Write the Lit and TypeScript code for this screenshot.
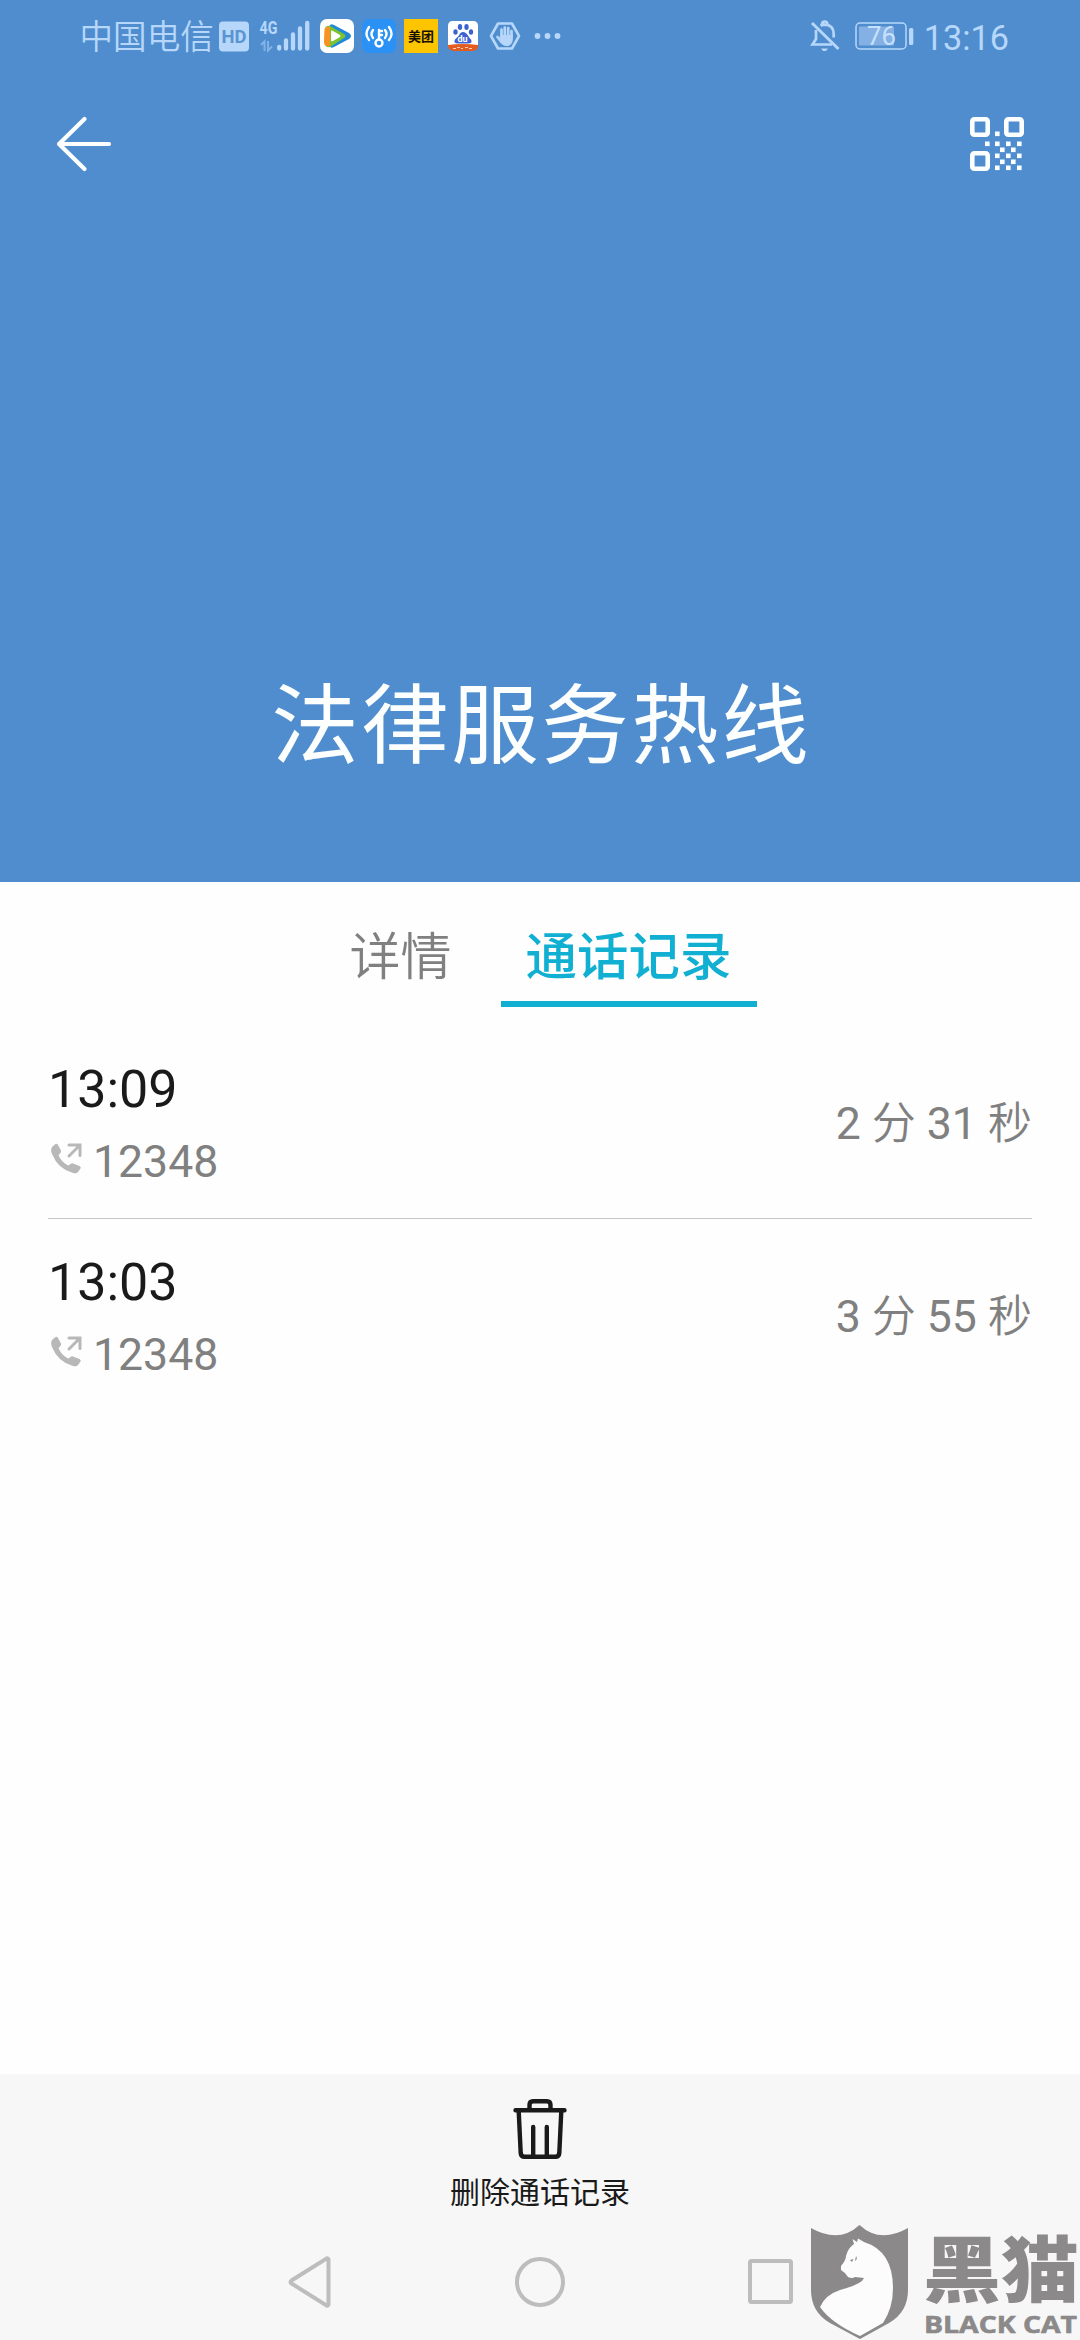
import { LitElement, html, css, svg } from "lit";
import { customElement, property } from "lit/decorators.js";

const CJK = css`"Noto Sans CJK SC", "Roboto", sans-serif`;
const LATIN = css`Roboto, "Noto Sans CJK SC", sans-serif`;

@customElement("status-bar")
class StatusBar extends LitElement {
  static styles = css`
    :host { display: flex; height: 72px; align-items: center; color: #b6d7fa; padding: 0 71px 0 79.5px; justify-content: space-between; }
    svg { display: block; flex: none; overflow: visible; }
    .group { display: flex; align-items: center; height: 72px; }
    .carrier { font: 350 33.6px/40px ${CJK}; width: 137px; margin: -2px 2.5px 0 0; white-space: nowrap; }
    .signal { margin: 0 9px 0 8px; }
    .apps { display: flex; align-items: center; gap: 8px; }
    .battery { margin: 0 9px 0 15px; }
    .time { font: 400 34.2px/40px ${LATIN}; margin-top: 3px; }
  `;
  render() {
    return html`
      <div class="group">
        <div class="carrier">中国电信</div>
        <svg width="30" height="31" viewBox="0 0 30 31">
          <rect width="30" height="30" y="0.5" rx="4" fill="#b6d7fa" />
          <text x="2.5" y="22" font-family="Roboto, sans-serif" font-weight="700" font-size="18" textLength="25" lengthAdjust="spacingAndGlyphs" fill="#5a93d2">HD</text>
        </svg>
        <svg class="signal" width="54" height="40" viewBox="0 -4 54 40">
          <text x="2.5" y="13.500" font-family="Roboto, sans-serif" font-weight="700" font-size="18" textLength="18" lengthAdjust="spacingAndGlyphs" fill="#b6d7fa">4G</text>
          <g stroke="#83b2e6" stroke-width="2" fill="none"><path d="M4 25l3.5-3.5V31M11 21v9.500l4-4" /></g>
          <g stroke="#b6d7fa" stroke-width="4.300" stroke-linecap="round">
            <path d="M22.200 27v1.500M29 20.500v8M36 14.500v14M43 8.500v20M50.200 3v25.500" />
          </g>
        </svg>
        <div class="apps">
          <svg width="34" height="34" viewBox="0 0 34 34">
            <rect width="34" height="34" rx="7" fill="#fff" />
            <path d="M9 8Q10 4 14 6L29 14Q33 17 29 20L14 28Q10 30 9 26Z" fill="#2388d8" />
            <path d="M5 10Q6 6 10 7L24 15Q27 17 24 19L10 28Q5 29 4.500 24Z" fill="#7bc42d" />
            <path d="M4.500 10Q6 7 10 8V27Q4 28 4 23Z" fill="#f89225" />
            <path d="M11 12.500Q11 11 13 12L20 16Q21 17 20 18L13 22Q11 23 11 21Z" fill="#fff" />
          </svg>
          <svg width="34" height="34" viewBox="0 0 34 34">
            <rect width="34" height="34" rx="7" fill="#2b91f5" />
            <g fill="none" stroke="#fff" stroke-width="2.400" stroke-linecap="round">
              <circle cx="17" cy="24" r="3.500" /><path d="M17 20V11M17 12h3M17 16h3" />
              <path d="M11 11q-3 4 0 8M7 8q-5 7 0 13M23 11q3 4 0 8M27 8q5 7 0 13" />
            </g>
          </svg>
          <svg width="34" height="34" viewBox="0 0 34 34">
            <rect width="34" height="34" fill="#fdc500" />
            <text x="4" y="22" font-family="Noto Sans CJK SC, sans-serif" font-weight="700" font-size="13" textLength="26" fill="#171000">美团</text>
          </svg>
          <svg width="34" height="34" viewBox="0 0 34 34">
            <path d="M7 2H27Q32 2 32 7V28H2V7Q2 2 7 2Z" fill="#fff" />
            <path d="M2 26Q17 24 32 26V28Q31 32 26 32H8Q2 31 2 27Z" fill="#e45b20" />
            <g fill="#3c62d2">
              <ellipse cx="9.500" cy="13" rx="2.200" ry="2.700" /><ellipse cx="14" cy="8" rx="2.200" ry="3" />
              <ellipse cx="20.500" cy="8" rx="2.200" ry="3" /><ellipse cx="25" cy="13" rx="2.200" ry="2.700" />
              <path d="M17 13q3 0 5 3.500t3 4q2 4-3 4H12q-5 0-3-4l4-4q1-3.500 4-3.500Z" />
            </g>
            <text x="11.500" y="23" font-family="Roboto, sans-serif" font-weight="700" font-size="9" fill="#fff">du</text>
            <path d="M7 29.500h3m1-1h3m1 1h2m2-1h3m1 1h3" stroke="#fff" stroke-width="1.200" opacity=".7" />
          </svg>
          <svg width="34" height="34" viewBox="0 0 34 34">
            <path d="M10 4.500H24L31 17L24 29.500H10L3 17Z" fill="none" stroke="#b6d7fa" stroke-width="2.600" stroke-linejoin="round" />
            <g stroke="#b6d7fa" stroke-width="2.700" stroke-linecap="round" fill="none"><path d="M13.500 18V10.500M16.800 17V8.500M20.200 17V9M23.500 18V12M9.500 18l4 5" /></g>
            <path d="M12.200 16H24.800V21Q24 27 18.500 27Q14 27 11 21Z" fill="#b6d7fa" />
          </svg>
          <svg width="34" height="34" viewBox="0 0 34 34" fill="#b6d7fa"><circle cx="7.500" cy="17" r="2.900" /><circle cx="17.500" cy="17" r="2.900" /><circle cx="27.500" cy="17" r="2.900" /></svg>
        </div>
      </div>
      <div class="group">
        <svg width="30" height="32" viewBox="0 0 30 32" fill="none" stroke="#b6d7fa" stroke-width="2.700">
          <path d="M2 3L28.500 29" stroke-width="3" />
          <path d="M6 10V19L2.500 24.500H22M10.500 5.800Q12.500 4.700 14.500 4.700Q23.700 5 23.700 14V17.500M12 4.500q0-3 2.700-3t2.700 3" />
          <path d="M11 28.500h7l-2 2.500h-3z" fill="#b6d7fa" stroke="none" />
        </svg>
        <svg class="battery" width="60" height="30" viewBox="0 0 60 30">
          <rect x="1" y="2" width="50" height="26" rx="4" fill="none" stroke="#b6d7fa" stroke-width="1.500" />
          <rect x="4" y="5.500" width="35" height="19" rx="1" fill="#85b0e3" />
          <rect x="54" y="7" width="4.300" height="17" rx="1.500" fill="#b6d7fa" />
          <text x="12" y="23.500" font-family="Roboto, sans-serif" font-size="25" textLength="29" lengthAdjust="spacingAndGlyphs" fill="#c6e1fd">76</text>
        </svg>
        <div class="time">13:16</div>
      </div>`;
  }
}

@customElement("call-row")
class CallRow extends LitElement {
  @property() time = "";
  @property() number = "";
  @property() duration = "";
  static styles = css`
    :host { display: flex; box-sizing: border-box; height: 193px; justify-content: space-between; align-items: center; font-family: ${LATIN}; border-bottom: 1px solid #c6c6c6; }
    :host([last]) { border-color: transparent; }
    .info { display: flex; flex-direction: column; gap: 14px; align-self: flex-start; padding-top: 32px; }
    .time { font-size: 52px; line-height: 64px; color: #1a1a1a; }
    .line { display: flex; gap: 11px; height: 52px; align-items: flex-start; padding-left: 2px; }
    .number { font-size: 44.6px; line-height: 52px; color: #808080; }
    .icon { display: block; margin-top: 6px; }
    .duration { font-size: 44.6px; line-height: 52px; color: #808080; padding-top: 3px; white-space: nowrap; }
    .cjk { font-weight: 350; font-size: 44px; }
  `;
  render() {
    const parts = this.duration.split(" ");
    return html`
      <div class="info">
        <div class="time">${this.time}</div>
        <div class="line">
          <svg class="icon" width="32" height="34" viewBox="0 0 32 34">
            <path d="M2.500 4.500L5.500 2Q7 1.300 8 3L11 8.500Q11.500 10 10 11.500L8.500 13Q11 20 18.500 23.500L20.500 22Q21.500 21 23 21.500L29.500 24Q31.500 25 30.500 26.500L28 30Q26.500 32 23 31Q8 27 2 12Q0 7 2.500 4.500Z" fill="#b8b8b8" />
            <path d="M19 3H30V13.500M29.500 3.500L19 14" fill="none" stroke="#b8b8b8" stroke-width="3" stroke-linecap="round" />
          </svg>
          <div class="number">${this.number}</div>
        </div>
      </div>
      <div class="duration">${parts[0]} <span class="cjk">${parts[1]}</span> ${parts[2]} <span class="cjk">${parts[3]}</span></div>`;
  }
}

@customElement("cat-mark")
class CatMark extends LitElement {
  static styles = css`
    :host { display: block; }
    svg { display: block; overflow: visible; }
  `;
  render() {
    return html`
      <svg width="270" height="116" viewBox="0 0 270 116">
        <path d="M1 4Q29 20 49.500 1Q70 20 98 4V66Q98 88 79 99L50 115L20 99Q1 88 1 66Z" fill="#8b8989" />
        <path d="M42.500 15L47 18L48 14.500L54 18Q83 27 83 64Q83 84 73 99L50 112Q21 99 10 83Q15 71 30 66Q52 60 54 54L45 53Q42 55 38 53Q36 49 31 46L31 42Q36 36 36 32Q38 24 44 20Z" fill="#fcfcfc" />
        <path d="M40 36l3.500-1l-1.500 3zM46 32q2 3-1 5z" fill="#8b8989" />
        <g fill="#8b8989">
          <text x="113" y="72" font-family="Noto Sans CJK SC, sans-serif" font-weight="900" font-size="72" textLength="156" lengthAdjust="spacingAndGlyphs">黑猫</text>
          <text x="114" y="109" font-family="Open Sans, Liberation Sans, sans-serif" font-weight="700" font-size="23.500" textLength="153" lengthAdjust="spacingAndGlyphs" stroke="#8b8989" stroke-width="0.600">BLACK CAT</text>
        </g>
      </svg>`;
  }
}

@customElement("app-root")
class AppRoot extends LitElement {
  static styles = css`
    :host { display: flex; flex-direction: column; width: 1080px; height: 2340px; position: relative; overflow: hidden; background: #fefefe; font-family: ${CJK}; }
    svg { display: block; }
    .hero { height: 882px; background: #4f8dce; display: flex; flex-direction: column; }
    .toolbar { display: flex; justify-content: space-between; align-items: center; height: 144px; padding: 0 55px 0 55px; }
    .title { margin: auto 0 113px; text-align: center; color: #fdffff; font-size: 87.5px; letter-spacing: 2.5px; text-indent: 2.5px; line-height: 100px; font-weight: 400; }
    .tabs { display: flex; justify-content: center; gap: 24px; height: 125px; padding-left: 1px; }
    .tab { box-sizing: border-box; height: 125px; padding: 40px 25px 0; font-size: 51px; line-height: 62px; color: #808080; font-weight: 350; border-bottom: 6px solid transparent; }
    .tab.active { color: #11b0d3; border-color: #11b0d3; font-weight: 500; font-size: 51.5px; }
    .list { padding: 19px 48px 0; flex: 1; }
    .footer { height: 266px; background: #f7f7f7; display: flex; flex-direction: column; align-items: center; }
    .delete { display: flex; flex-direction: column; align-items: center; height: 150px; padding-top: 23px; box-sizing: border-box; font-size: 30px; line-height: 40px; color: #1a1a1a; }
    .delete .label { margin-top: 9px; }
    .nav { display: flex; align-items: center; justify-content: space-between; width: 508px; height: 116px; padding-left: 1px; }
    .mark { position: absolute; left: 810px; top: 2224px; }
  `;
  private cells = [[25, 14], [15, 24], [25, 24], [36, 24], [47, 24], [30, 30], [41, 30], [25, 36], [36, 36], [47, 36], [30, 42], [41, 42], [25, 48], [36, 48], [47, 48]];
  private calls = [
    { time: "13:09", number: "12348", duration: "2 分 31 秒", last: false },
    { time: "13:03", number: "12348", duration: "3 分 55 秒", last: true },
  ];
  render() {
    return html`
      <div class="hero">
        <status-bar></status-bar>
        <div class="toolbar">
          <svg width="58" height="58" viewBox="0 0 58 58" fill="none" stroke="#fdffff" stroke-width="4.200" stroke-linecap="round" stroke-linejoin="round">
            <path d="M29.500 4L4 29L29.500 54M4 29H54" />
          </svg>
          <svg width="56" height="56" viewBox="-1 -1 56 56">
            <g fill="none" stroke="#fdffff" stroke-width="4.600">
              <rect x="2.300" y="2.300" width="15.400" height="15.400" rx="2" /><rect x="36.300" y="2.300" width="15.400" height="15.400" rx="2" /><rect x="2.300" y="36.300" width="15.400" height="15.400" rx="2" />
            </g>
            ${this.cells.map(([x, y]) => svg`<rect x=${x} y=${y + 0.5} width="4.600" height="4.600" fill="#fdffff" />`)}
          </svg>
        </div>
        <div class="title">法律服务热线</div>
      </div>
      <div class="tabs">
        <div class="tab">详情</div>
        <div class="tab active">通话记录</div>
      </div>
      <div class="list">
        ${this.calls.map((c) => html`<call-row .time=${c.time} .number=${c.number} .duration=${c.duration} ?last=${c.last}></call-row>`)}
      </div>
      <div class="footer">
        <div class="delete">
          <svg width="58" height="64" viewBox="0 0 58 64" fill="none" stroke="#1a1a1a" stroke-width="4.400" stroke-linecap="round" stroke-linejoin="round">
            <path d="M4.500 13.200H53.500M18.500 13V8Q18.500 4.200 22 4.200H36Q39.500 4.200 39.500 8V13M7.700 14L9.700 56Q10 59.800 13.500 59.800H44.500Q48 59.800 48.300 56L50.300 14M22.200 30V59M35.800 30V59" />
          </svg>
          <div class="label">删除通话记录</div>
        </div>
        <div class="nav">
          <svg width="46" height="54" viewBox="0 0 46 54"><path d="M41.500 4.500V49.500Q41 51 39.500 50.500L4.500 28.500Q2.500 27 4.500 25.500L39.500 3.500Q41 3 41.500 4.500Z" fill="none" stroke="#bdbdbd" stroke-width="4" /></svg>
          <svg width="54" height="54" viewBox="0 0 54 54"><circle cx="27" cy="27" r="23" fill="none" stroke="#bdbdbd" stroke-width="4" /></svg>
          <svg width="48" height="48" viewBox="0 0 48 48"><rect x="3" y="3" width="41" height="41" rx="1.500" fill="none" stroke="#bdbdbd" stroke-width="4" /></svg>
        </div>
      </div>
      <cat-mark class="mark"></cat-mark>`;
  }
}
